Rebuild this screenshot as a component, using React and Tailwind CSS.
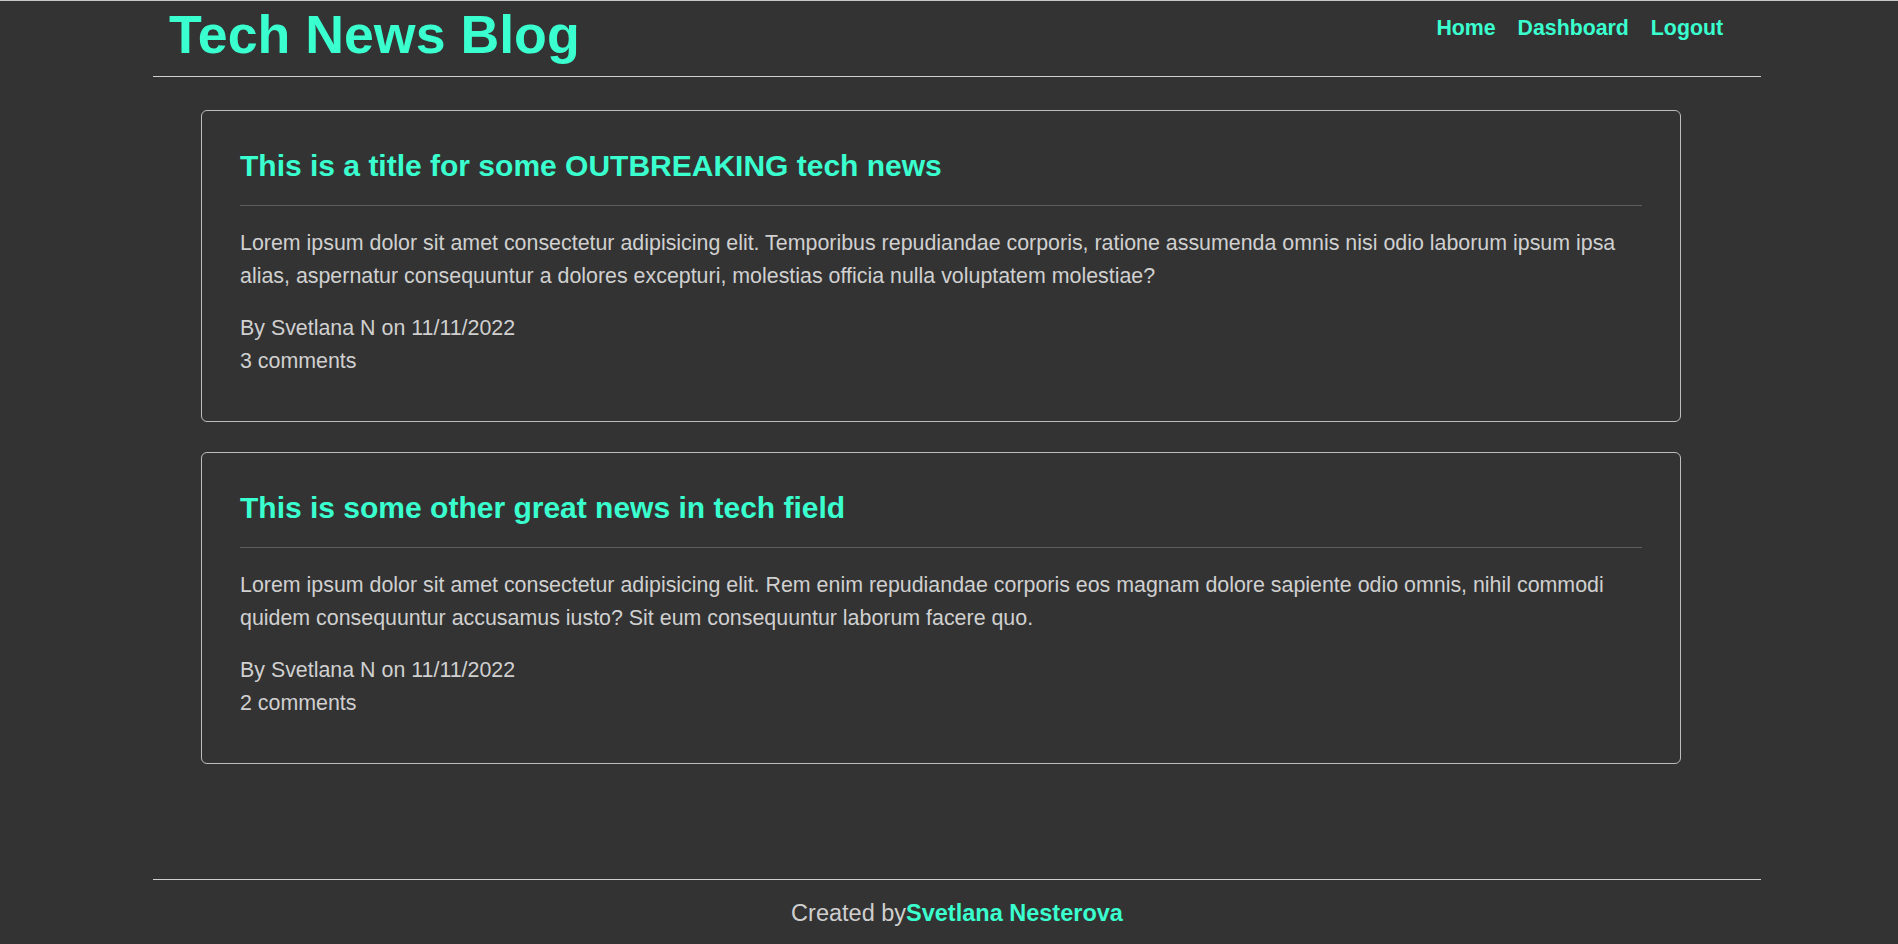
import React from "react"

const posts = [
    {
        title: "This is a title for some OUTBREAKING tech news",
        body: "Lorem ipsum dolor sit amet consectetur adipisicing elit. Temporibus repudiandae corporis, ratione assumenda omnis nisi odio laborum ipsum ipsa alias, aspernatur consequuntur a dolores excepturi, molestias officia nulla voluptatem molestiae?",
        author: "Svetlana N",
        date: "11/11/2022",
        comments: 3,
    },
    {
        title: "This is some other great news in tech field",
        body: "Lorem ipsum dolor sit amet consectetur adipisicing elit. Rem enim repudiandae corporis eos magnam dolore sapiente odio omnis, nihil commodi quidem consequuntur accusamus iusto? Sit eum consequuntur laborum facere quo.",
        author: "Svetlana N",
        date: "11/11/2022",
        comments: 2,
    },
]

function PostCard({ post }) {
    return (
        <article className="w-[1480px] rounded-[6px] border border-[#bdbdbd] px-[38px] pt-[37px] pb-[44px]">
            <h2 className="text-[30px] font-bold leading-[36px] text-[#3affcf]">{post.title}</h2>
            <div className="mt-[21px] h-px bg-[#5e5e5e]" />
            <p className="mt-[21px] mb-[20px] text-[21.4px] leading-[32.5px] text-[#d0d0d0]">{post.body}</p>
            <div className="text-[21.4px] leading-[32.5px] text-[#d0d0d0]">
                <div>By {post.author} on {post.date}</div>
                <div>{post.comments} comments</div>
            </div>
        </article>
    )
}

export default function App() {
    return (
        <div
            className="flex min-h-screen flex-col border-t border-[#c8c8c8] bg-[#333333]"
            style={{ fontFamily: '"Liberation Sans", Arial, sans-serif' }}
        >
            {/* Header */}
            <header className="ml-[153px] flex h-[76px] w-[1608px] items-start justify-between border-b border-[#d0d0d0] pl-[16px] pr-[38px]">
                <h1 className="pt-[2px] text-[53.7px] font-bold leading-[62px] text-[#3affcf]">Tech News Blog</h1>
                <nav className="mt-[15px] flex gap-[22px] text-[21.3px] font-bold leading-[24px] text-[#3affcf]">
                    <a href="#">Home</a>
                    <a href="#">Dashboard</a>
                    <a href="#">Logout</a>
                </nav>
            </header>

            {/* Posts */}
            <main className="ml-[201px] mt-[33px] flex flex-col gap-[30px]">
                {posts.map((post) => (
                    <PostCard key={post.title} post={post} />
                ))}
            </main>

            {/* Footer */}
            <footer className="ml-[153px] mt-auto w-[1608px] border-t border-[#d0d0d0] pt-[20px] pb-[17px] text-center text-[23.5px] leading-[27px] text-[#cfcfcf]">
                Created by<span className="font-bold text-[#3affcf]">Svetlana Nesterova</span>
            </footer>
        </div>
    )
}
